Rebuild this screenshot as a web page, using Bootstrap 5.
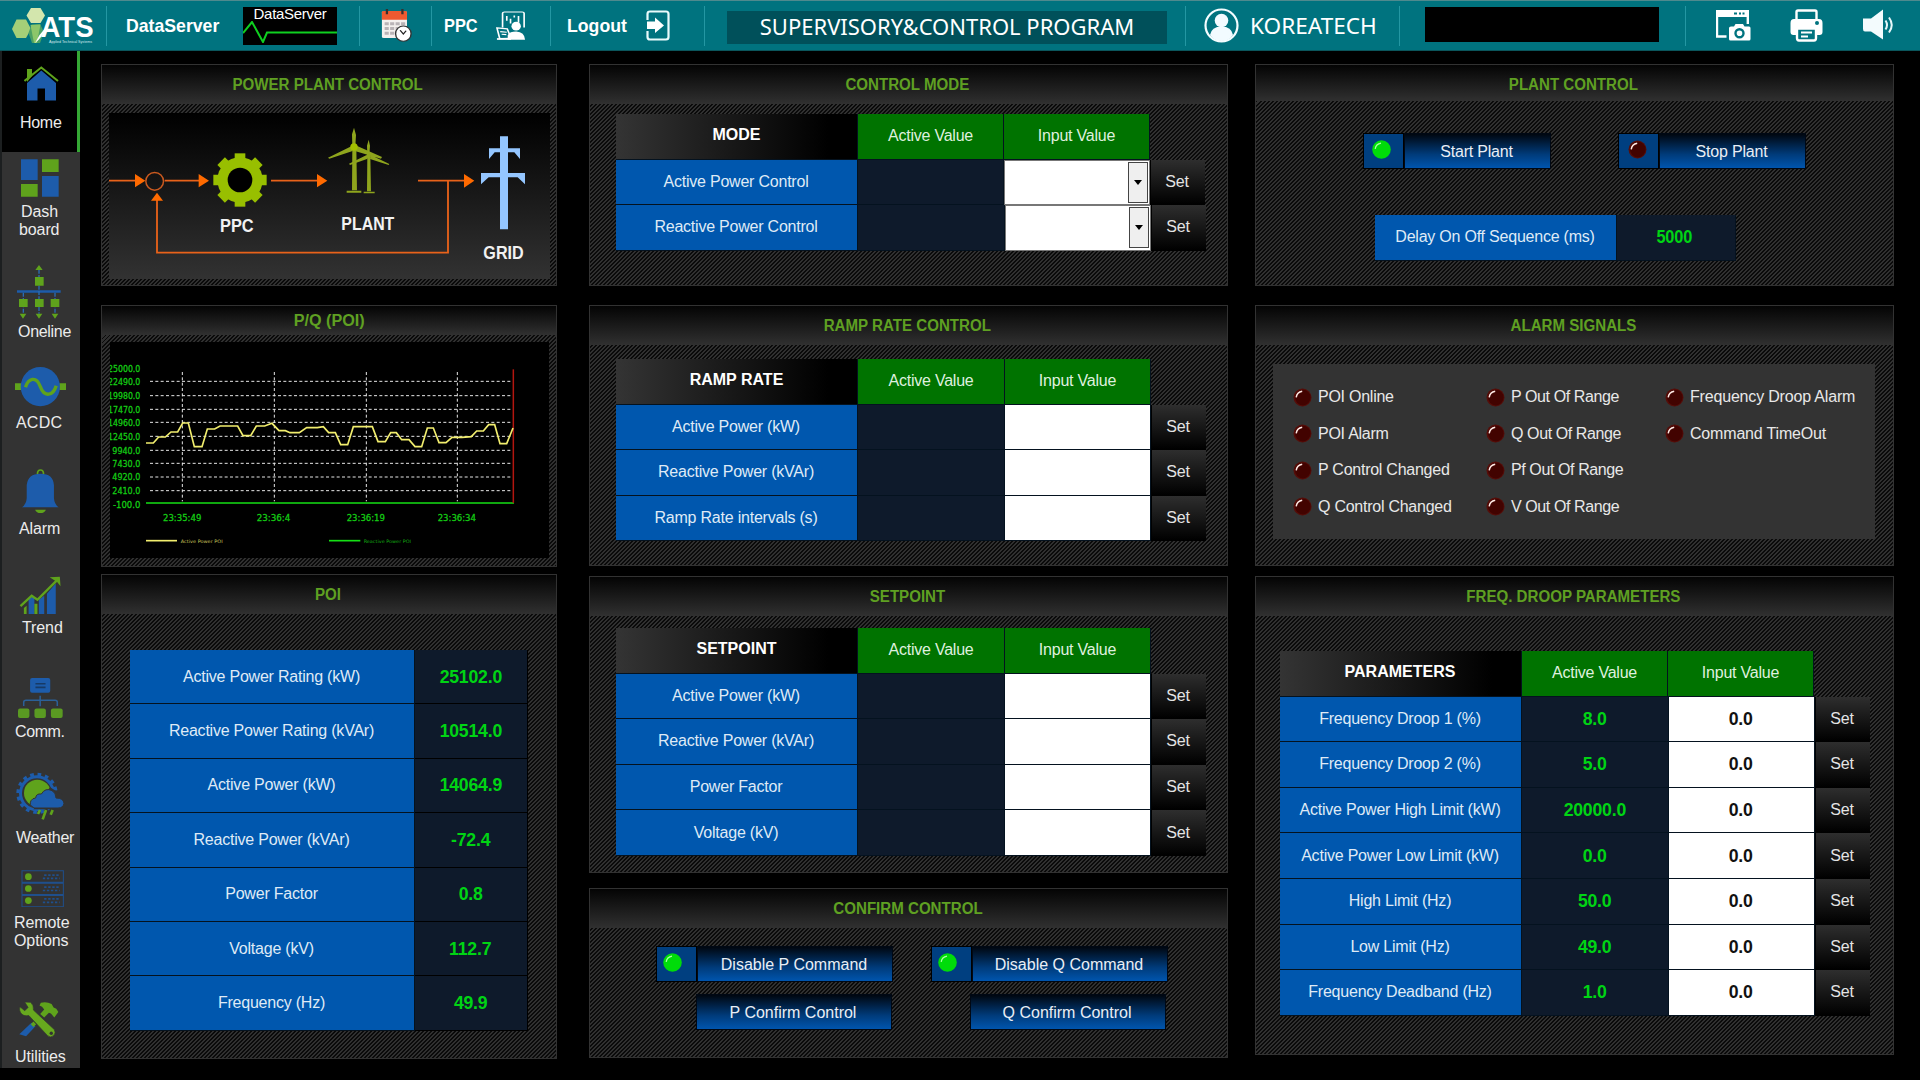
<!DOCTYPE html>
<html lang="en">
<head>
<meta charset="utf-8">
<meta name="viewport" content="width=device-width, initial-scale=1">
<title>Supervisory &amp; Control Program</title>
<link rel="stylesheet" href="https://cdn.jsdelivr.net/npm/bootstrap@5.3.0/dist/css/bootstrap.min.css">
<style>
  body{background:#000;color:#e8e8e8;font:16px/18px "Liberation Sans",Arial,sans-serif;width:1920px;height:1080px;overflow:hidden}
  svg{display:block;flex:none}
  /* top bar */
  .topbar{height:51px;background:#00737f;border-top:1px solid #4f8a8e;border-bottom:1px solid #0b565c;padding:0}
  .seg{display:flex;align-items:center;border-right:1px solid #2497a3;flex:none;height:40px}
  .seg.last{border:0}
  .lbl{font-weight:700;font-size:18px;color:#fff;white-space:nowrap}
  .lbl.tall{font-size:19px;transform-origin:0 50%;transform:scaleX(.93)}
  .ds{width:94px;height:38px;background:#000;margin-left:23px;color:#fff;text-align:center}
  .ds span{display:block;font-size:15px;line-height:14px;letter-spacing:-.3px}
  .prog{width:440px;height:33px;background:#00505a;color:#fff;font:22px/30px "Noto Sans","Open Sans",sans-serif;text-align:center;white-space:nowrap}
  .user-name{font:22.6px/30px "Noto Sans","Open Sans",sans-serif;color:#fff}
  .clockbox{width:234px;height:35px;background:#000}
  .sq{display:inline-block;white-space:nowrap}
  /* side bar */
  .side{width:80px;height:1017px;background:#333;border-left:2px solid #1c1f20;flex:none}
  .side .home{height:101px;background:#000;border-right:3px solid #35a835;padding:15px 0 0}
  .side a{display:block;color:#ececec;text-decoration:none;white-space:nowrap;letter-spacing:-.1px}
  /* panels */
  .panel{border:1px solid #323232;flex:none;background:repeating-linear-gradient(135deg,#0a0a0a 0 1.4px,#303030 1.4px 2.83px)}
  .panel-title{height:39px;padding-bottom:2px;background:linear-gradient(#040404,#303030);color:#5fa022;font-weight:700;font-size:17.4px;display:flex;align-items:center;justify-content:center}
  .panel-title span{transform:translateX(-1px) scaleX(.868);white-space:nowrap}
  .c1{width:456px}.c2{width:639px}.c3{width:639px}
  .ln{display:flex}
  .ln>*{display:flex;align-items:center;justify-content:center;flex:none;border:1px solid #04121f;border-width:0 1px 1px 0;height:45.6px;letter-spacing:-.22px}
  .ln>.nm{width:242px;background:#0057ae;color:#dfeaf6;padding-right:1px}
  .ln>.av{width:147px;background:#0e1a2b}
  .ln>.iv{width:146px;background:#fff}
  .ln>.st{width:55px;padding:0;border-radius:0;border:0;border-left:1px solid #000;border-bottom:1px solid #000;background:linear-gradient(#2e2e2e,#000);color:#e4e4e4;font-size:16px;padding-right:2px}
  .ln>.hd{background:linear-gradient(90deg,#343434,#000 88%);color:#fff;font-weight:700;width:242px;letter-spacing:0;padding-bottom:2px}
  .ln>.gr{background:#007300;color:#dff0df;width:146px}
  .num{color:#00d414;font-weight:700;font-size:18.6px;padding-right:1px}
  .num b{transform:scaleX(.95)}
  .ln>.iv.num{color:#111}
  .ln>.combo{background:#fff;border:1px solid #777;padding:0;justify-content:flex-end}
  .combo i{display:flex;align-items:center;justify-content:center;width:20px;height:41px;background:#efefef;border:1px solid #444;margin-right:1px}
  .combo i:after{content:"";border:4px solid transparent;border-top:5px solid #000;border-bottom:0}
  .poi .ln>*{height:54.4px}
  .poi .ln>.nm{width:285px}.poi .ln>.av{width:113px;border-color:#000}
  .led{width:19px;height:19px;flex:none}
  .led-cell{width:41px;height:36px;background:#003f80;border:1px solid #000;display:flex;align-items:center;justify-content:center;padding-right:5px;padding-bottom:3px;flex:none}
  .cmd{width:147px;height:36px;border:1px solid #000814;border-radius:0;padding:1px 2px 0 0;background:linear-gradient(#00060f,#003b7a 60%,#0055ae);color:#e9eef5;font-size:16px;letter-spacing:-.2px;flex:none}
  .cmd.wide{width:196px;letter-spacing:0}
  .sig{display:flex;align-items:center;gap:6px;height:36.5px;letter-spacing:-.25px;white-space:nowrap}
  .sigbox{background:#333;width:602px;height:175px;margin:19px 0 0 17px;padding:15px 0 0 20px}
</style>
<script src="https://cdn.jsdelivr.net/npm/bootstrap@5.3.0/dist/js/bootstrap.bundle.min.js"></script>
</head>
<body>
<svg width="0" height="0" class="position-absolute">
  <defs>
    <symbol id="off" viewBox="0 0 19 19"><circle cx="9.5" cy="9.5" r="9" fill="#560d08"/><circle cx="9.8" cy="9.6" r="7.8" fill="#420300"/><path d="M3.2 9.3C3.6 6 5.6 3.9 9.2 3.2" fill="none" stroke="#ffe9e4" stroke-width="1.5"/></symbol>
    <symbol id="on" viewBox="0 0 19 19"><circle cx="9.5" cy="9.5" r="9.3" fill="#00dc0a"/><path d="M3.2 8.8C3.6 5.8 5.6 3.9 9 3.2" fill="none" stroke="#aaffa5" stroke-width="1.3"/></symbol>
  </defs>
</svg>

<header class="topbar d-flex align-items-center">
  <div class="seg" style="width:107px">
    <svg width="86" height="42" viewBox="0 0 86 42" style="margin-left:10px">
      <g transform="translate(-10 -4)">
        <path d="M31 7H40.500L45 14.500 40.500 22H31L26.500 14.500z" fill="#d3e6ad"/>
        <path d="M16.500 18.500H26L31 28 26 37H16.500L12 28z" fill="#a5cf78"/>
        <path d="M31.500 23.500L40 23 44 31 40 42H32L28.500 32z" fill="#4aa064"/>
        <path d="M30.500 24L40.500 23.500 37 42H34z" fill="#8cc66a"/>
        <path d="M35 42Q42 37 45.500 27L39.500 34z" fill="#fff"/>
        <text x="40.500" y="36" font-family="Liberation Sans" font-weight="700" font-size="30" textLength="53" lengthAdjust="spacingAndGlyphs" fill="#fff">ATS</text>
        <text x="49" y="41.500" font-family="Liberation Sans" font-size="4" textLength="43" lengthAdjust="spacingAndGlyphs" fill="#d5eaec">Applied Technical Systems</text>
      </g>
    </svg>
  </div>
  <div class="seg" style="width:253px;padding-left:19px">
    <span class="lbl tall" style="width:94px">DataServer</span>
    <div class="ds"><span>DataServer</span>
      <svg width="94" height="22" viewBox="0 0 94 22"><path d="M0 12L9 1 20 21 24 11.500H94" fill="none" stroke="#0fd020" stroke-width="2"/></svg>
    </div>
  </div>
  <div class="seg" style="width:72px;padding-left:21px">
    <svg width="31" height="33" viewBox="829 28 68 99" preserveAspectRatio="none">
      <path d="M831 36H886V112Q886 115 882 115H835Q831 115 831 112z" fill="#f4f0ee"/><path d="M831 38Q831 34 835 34H882Q886 34 886 38V60H831z" fill="#ee5a30"/>
      <path d="M842 28V44M876 28V44" stroke="#35302f" stroke-width="5"/>
      <path d="M837 68h9v9h-9zM849 68h9v9h-9zM861 68h9v9h-9zM873 68h9v9h-9zM837 82h9v9h-9zM849 82h9v9h-9zM861 82h9v9h-9zM837 96h9v9h-9zM849 96h9v9h-9z" fill="#b9b3b6"/>
      <ellipse cx="878" cy="102" rx="17" ry="23" fill="#fff" stroke="#333" stroke-width="3"/><path d="M871 92L878 103 884 93" fill="none" stroke="#222" stroke-width="3"/>
    </svg>
  </div>
  <div class="seg" style="width:119px;padding-left:12px">
    <span class="lbl tall" style="width:52px;transform:scaleX(.86)">PPC</span>
    <svg width="30" height="29" viewBox="1080 35 64 86" preserveAspectRatio="none">
      <g fill="none" stroke="#fff" stroke-width="3.500"><path d="M1094 84V42Q1094 38 1098 38H1136Q1140 38 1140 42V84"/><path d="M1103 50V64M1111 58V72M1119 48V54M1128 50V70" /><path d="M1082 85L1104 88 1112 116 1088 117z"/><path d="M1089 96l14 2M1092 104l10 1"/></g>
      <ellipse cx="1123" cy="80" rx="10" ry="13" fill="#fff"/><path d="M1105 120V108Q1108 96 1123 96 1141 98 1142 120z" fill="#fff"/><path d="M1082 118h30" stroke="#fff" stroke-width="5"/>
    </svg>
  </div>
  <div class="seg" style="width:154px;padding-left:16px">
    <span class="lbl tall" style="width:79px">Logout</span>
    <svg width="24" height="31" viewBox="0 0 24 31"><path d="M1.500 10V4Q1.500 1.500 4 1.500H20Q22.500 1.500 22.500 4V27Q22.500 29.500 20 29.500H4Q1.500 29.500 1.500 27V21" fill="none" stroke="#e9fbfc" stroke-width="2.200"/><path d="M1 11.500H9V7.500L18 15.500 9 23V19H1z" fill="#fff"/></svg>
  </div>
  <div class="seg" style="width:481px;padding-left:22px;padding-top:3px"><div class="prog"><span class="sq">SUPERVISORY&amp;CONTROL PROGRAM</span></div></div>
  <div class="seg" style="width:214px;padding-left:18px">
    <svg width="35" height="35" viewBox="0 0 35 35"><circle cx="17.500" cy="17.500" r="16" fill="none" stroke="#f4fdff" stroke-width="2.200"/><circle cx="17.500" cy="12.500" r="6.800" fill="#f2fbff"/><path d="M6 27Q7.500 18.500 17.500 18.500T29 27Q25 33 17.500 33T6 27z" fill="#f2fbff"/></svg>
    <span class="user-name sq" style="margin-left:11px">KOREATECH</span>
  </div>
  <div class="seg" style="width:286px;padding-left:25px;padding-bottom:3px"><div class="clockbox"></div></div>
  <div class="seg last" style="width:234px;padding-left:30px">
    <svg width="35" height="31" viewBox="0 0 35 31"><path d="M1 1V26.500H10.500" fill="none" stroke="#fff" stroke-width="2.400"/><path d="M0 0H33V7H0z" fill="#fff"/><path d="M18 3.500h3M23 3.500h2M26.500 3.500h2" stroke="#00737f" stroke-width="1.800"/><path d="M31.800 5V14" stroke="#fff" stroke-width="2.400"/><path d="M15 16.500H18L19.500 14H27L28.500 16.500H33Q34.500 16.500 34.500 18V29Q34.500 30.500 33 30.500H14.500Q13 30.500 13 29V18Q13 16.500 15 16.500z" fill="#fff"/><circle cx="23.500" cy="23.300" r="4" fill="none" stroke="#00737f" stroke-width="2.400"/></svg>
    <svg width="33" height="33" viewBox="0 0 33 33" style="margin-left:39px;margin-bottom:1px"><path d="M6.500 10V3Q6.500 1.500 8 1.500H25Q26.500 1.500 26.500 3V10" fill="none" stroke="#fff" stroke-width="2.400"/><path d="M4 10H29Q32.500 10 32.500 14V23Q32.500 26 29.500 26H27V19H6V26H3.500Q.5 26 .5 23V14Q.5 10 4 10z" fill="#fff"/><circle cx="27" cy="14" r="2" fill="#00737f"/><path d="M7 19.500H26V29Q26 31.500 24 31.500H9Q7 31.500 7 29z" fill="none" stroke="#fff" stroke-width="2.400"/><path d="M11 23.500H22M11 27.500H18" stroke="#fff" stroke-width="2"/></svg>
    <svg width="31" height="31" viewBox="0 0 31 31" style="margin-left:40px;margin-bottom:3px"><path d="M0 9.500H8L20 .5V30.500L8 22.500H2Q0 22.500 0 20z" fill="#f3fbfd"/><path d="M22.500 11.500Q25.500 16 22.500 20.500M26 8.500Q31.500 16 26 23.500" fill="none" stroke="#e7f8fa" stroke-width="2"/></svg>
  </div>
</header>

<main class="d-flex">
  <nav class="side">
    <a href="#" class="home">
      <svg width="35" height="36" viewBox="24 66 35 36" style="margin-left:22px"><path d="M27 82V69H32V76" fill="#5fa31c"/><path d="M24.500 81L41.300 67.500 58 81" fill="none" stroke="#5fa31c" stroke-width="2"/><path d="M27 83L41.300 70.500 56 83V100.500H45V88.500H37.500V100.500H27z" fill="#1d5cab"/></svg>
      <div style="margin:12px 0 0 18px;letter-spacing:-.3px">Home</div>
    </a>
    <a href="#" style="padding-top:7px">
      <svg width="38" height="38" viewBox="65 57 114 114" style="margin-left:19px"><path d="M65 58h50v62H65zM128 108h50v62H128z" fill="#1d5cab"/><path d="M128 58h50v38H128zM65 132h50v38H65z" fill="#5fa31c"/></svg>
      <div style="margin:6px 0 0 19px">Dash<br><span style="margin-left:-2px">board</span></div>
    </a>
    <a href="#" style="padding-top:26px">
      <svg width="44" height="54" viewBox="50 374 132 162" style="margin-left:15px"><path d="M50 450h131v7H50z" fill="#1d5cab"/><path d="M116 388V520M69 457V520M164 457V520" stroke="#2a6cb5" stroke-width="4" stroke-dasharray="12 4"/><path d="M104 410h26v26h-26zM56 476h26v24H56zM104 476h26v24h-26zM151 476h26v24h-26zM116 374l11 15h-22zM68 535l-10-15h20zM116 535l-10-15h20zM164 535l-10-15h20z" fill="#5fa31c"/></svg>
      <div style="margin:4px 0 0 16px;letter-spacing:-.3px">Oneline</div>
    </a>
    <a href="#" style="padding-top:26px">
      <svg width="51" height="40" viewBox="45 685 151 118" style="margin-left:13px"><path d="M45 733h20v20H45zM176 733h20v20h-20z" fill="#5fa31c"/><circle cx="120" cy="743" r="58" fill="#1d5cab"/><path d="M76 745C84 718 108 710 120 743S158 770 167 740" fill="none" stroke="#5fa31c" stroke-width="10"/></svg>
      <div style="margin:7px 0 0 14px;letter-spacing:.2px">ACDC</div>
    </a>
    <a href="#" style="padding-top:37px">
      <svg width="37" height="44" viewBox="65 988 110 131" style="margin-left:20px"><path d="M111 1003Q111 991 120 991T129 1003" fill="none" stroke="#5fa31c" stroke-width="5"/><path d="M104 1109H136Q132 1119 120 1119T104 1109z" fill="#5fa31c"/><path d="M65 1102Q78 1092 79 1074V1036Q82 1002 120 1002T160 1036V1074Q161 1092 174 1102z" fill="#1d5cab"/></svg>
      <div style="margin:7px 0 0 17px">Alarm</div>
    </a>
    <a href="#" style="padding-top:38px">
      <svg width="43" height="38" viewBox="58 1308 126 112" style="margin-left:17px"><path d="M86 1420V1376l11-8 6 6V1420zM116 1420V1378l16-12V1420zM140 1420V1360L166 1330V1420z" fill="#1d5cab"/><path d="M72 1420V1402l8-6V1420zM103 1420V1390h9V1420z" fill="#5fa31c"/><path d="M62 1397L95 1366 112 1378 170 1320" fill="none" stroke="#5fa31c" stroke-width="7"/><path d="M148 1312L178 1310 180 1338 170 1326z" fill="#5fa31c"/></svg>
      <div style="margin:5px 0 0 20px">Trend</div>
    </a>
    <a href="#" style="padding-top:41px">
      <svg width="45" height="40" viewBox="54 231 134 119" style="margin-left:16px"><rect x="90" y="231" width="60" height="44" rx="6" fill="#1d5cab"/><path d="M106 248h30M106 259h30" stroke="#173a66" stroke-width="5"/><path d="M120 284V315M71 314V303Q71 297 78 297H164Q171 297 171 303V314" fill="none" stroke="#2b6098" stroke-width="4.500"/><g fill="#5a9a22"><rect x="54" y="322" width="34" height="28" rx="6"/><rect x="103" y="322" width="34" height="28" rx="6"/><rect x="152" y="322" width="35" height="28" rx="6"/></g></svg>
      <div style="margin:5px 0 0 13px;letter-spacing:-.4px">Comm.</div>
    </a>
    <a href="#" style="padding-top:31px">
      <svg width="48" height="48" viewBox="48 514 144 144" style="margin-left:14px"><circle cx="111" cy="578" r="54" fill="#1d5cab"/><circle cx="111" cy="578" r="57" fill="none" stroke="#1d5cab" stroke-width="10" stroke-dasharray="11 11.380"/><circle cx="111" cy="578" r="45" fill="#333"/><circle cx="112" cy="577" r="40" fill="#5fa31c"/><path d="M100 626H200V590L150 560z" fill="#333"/><path d="M100 620Q86 614 93 600 98 592 107 592 108 578 124 580 136 560 156 570 168 576 168 592 190 592 192 608 190 622 174 622H104z" fill="#1d5cab" stroke="#333" stroke-width="3"/><path d="M120 628l-6 12M138 628l-10 28M158 628l-6 14" stroke="#5fa31c" stroke-width="8"/></svg>
      <div style="margin:9px 0 0 14px;letter-spacing:-.3px">Weather</div>
    </a>
    <a href="#" style="padding-top:23px">
      <svg width="43" height="37" viewBox="62 808 126 110" style="margin-left:19px"><g fill="none" stroke="#1f4f8c" stroke-width="3"><path d="M64 810H187V846H64zM64 846H187V881H64zM64 881H187V917H64z"/><path d="M64 846H187M64 882H187" stroke-width="6"/><path d="M126 833L176 833M130 823H176M126 869H176M130 859H176M126 904H176M130 894H176" stroke-dasharray="7 5" stroke-width="5"/></g><g fill="#5fa31c"><circle cx="83" cy="828" r="10"/><circle cx="83" cy="863" r="10"/><circle cx="83" cy="899" r="10"/></g></svg>
      <div style="margin:7px 0 0 12px">Remote<br>Options</div>
    </a>
    <a href="#" style="padding-top:51px">
      <svg width="40" height="37" viewBox="57 1203 119 110" style="margin-left:17px"><path d="M94 1268l12 10-28 30-20-6z" fill="#1d5cab"/><path d="M92 1272l8-8 8 8-8 8z" fill="#5fa31c"/><path d="M122 1208Q140 1204 154 1212L160 1222 168 1226 174 1236 162 1252 152 1240 146 1238 132 1252 120 1242 132 1228Q126 1218 118 1216z" fill="#5fa31c"/><path d="M74 1206L92 1207Q102 1216 100 1230L162 1288Q168 1298 160 1306 150 1314 142 1306L86 1246Q70 1250 62 1238 56 1230 60 1220L74 1232 84 1222z" fill="#67a91e" stroke="#333" stroke-width="2"/><circle cx="153" cy="1299" r="5" fill="#333"/></svg>
      <div style="margin:10px 0 0 13px">Utilities</div>
    </a>
  </nav>

  <section class="d-flex flex-column c1" style="margin-left:21px;padding-top:13px">
    <div class="panel" style="height:222px">
      <div class="panel-title"><span>POWER PLANT CONTROL</span></div>
      <svg width="441" height="166" viewBox="57 188 1323 498" style="margin:9px 0 0 7px">
        <defs><linearGradient id="pg" x1="0" y1="0" x2="0" y2="1"><stop offset="0" stop-color="#000"/><stop offset="1" stop-color="#323232"/></linearGradient></defs>
        <rect x="57" y="188" width="1323" height="498" fill="url(#pg)"/>
        <g fill="none" stroke="#e8621a" stroke-width="5.500"><path d="M57 391H140M224 391H330M543 391H684M984 391H1126M1074 393V607H201V445"/><circle cx="194" cy="393" r="26.500" stroke="#c9591f" stroke-width="4.500"/></g>
        <path d="M135 371L166 391 135 411zM326 371L357 391 326 411zM681 371L712 391 681 411zM1122 371L1153 391 1122 412zM201 427L219 451H183z" fill="#ff6a00"/>
        <g fill="#98bf00"><circle cx="450" cy="389" r="68"/>
          <path d="M434 309h32v160h-32z"/><path d="M434 309h32v160h-32z" transform="rotate(45 450 389)"/><path d="M434 309h32v160h-32z" transform="rotate(90 450 389)"/><path d="M434 309h32v160h-32z" transform="rotate(135 450 389)"/></g>
        <circle cx="450" cy="389" r="37" fill="#000"/>
        <g fill="#8fa51d"><path d="M787 292h12l2 128h-15zM832 318h9l2 105h-12z"/><path d="M770 421h44v6h-44zM821 424h33v5h-33z"/><path d="M792 232l6 22-2 34h-9l-1-36zM836 268l4 18-2 28h-6l-1-28z"/><path d="M784 288l-70 34 4 3 70-23zM800 286l76 34-3 5-76-22zM830 314l-53 26 3 4 53-19zM842 314l56 27-2 3-56-18z"/><circle cx="792" cy="290" r="11" fill="#a3c000"/><circle cx="836" cy="317" r="7"/></g>
        <path d="M1230 258h24V294H1290V326L1273 306H1254V368H1305V402L1283 381H1254V537H1230V381H1196L1173 402V368H1230V306H1214L1197 326V294H1230z" fill="#94c6ff"/>
        <g font-family="Liberation Sans" font-weight="700" font-size="55" fill="#f2f2f2"><text x="390" y="544" textLength="101" lengthAdjust="spacingAndGlyphs">PPC</text><text x="754" y="539" textLength="159" lengthAdjust="spacingAndGlyphs">PLANT</text><text x="1180" y="625" textLength="121" lengthAdjust="spacingAndGlyphs">GRID</text></g>
      </svg>
    </div>
    <div class="panel" style="height:262px;margin-top:19px">
      <div class="panel-title" style="height:29px"><span style="transform:scaleX(.93)">P/Q (POI)</span></div>
      <svg width="439" height="216" viewBox="60 126 1317 648" style="margin:7px 0 0 8px">
        <rect x="60" y="126" width="1317" height="648"/>
        <g stroke="#e6e6e6" stroke-width="3" stroke-dasharray="9 7"><path d="M180 244H1268M180 287H1268M180 328H1268M180 367H1268M180 409H1268M180 451H1268M180 490H1268M180 531H1268M180 572H1268M277 216V604M553 216V604M829 216V604M1102 216V604"/></g>
        <path d="M168 609H1272" stroke="#15e015" stroke-width="5"/>
        <path d="M1270 208V609" stroke="#b3160f" stroke-width="4.500"/>
        <path d="M168 429H190L206 411H226L243 396H263L278 369H295L313 440H336L352 387H374L390 378H443L459 407H482L499 378H524L546 370 567 392H586L600 398H628L650 383H682L700 380 716 398H736L752 434H773L790 380H847L864 425H886L902 398H919L935 419H957L975 440H995L1012 384H1030L1047 428H1068L1086 412H1116L1144 410 1160 393H1180L1196 374H1214L1230 431H1250L1269 384" fill="none" stroke="#f2ee6e" stroke-width="5"/>
        <g font-family="DejaVu Sans Condensed,DejaVu Sans" font-size="27" fill="#14cc14" stroke="#14cc14" stroke-width=".8" text-anchor="end"><text x="151" y="216" textLength="97" lengthAdjust="spacingAndGlyphs">25000.0</text><text x="151" y="254" textLength="97" lengthAdjust="spacingAndGlyphs">22490.0</text><text x="151" y="296" textLength="97" lengthAdjust="spacingAndGlyphs">19980.0</text><text x="151" y="338" textLength="97" lengthAdjust="spacingAndGlyphs">17470.0</text><text x="151" y="377" textLength="97" lengthAdjust="spacingAndGlyphs">14960.0</text><text x="151" y="419" textLength="97" lengthAdjust="spacingAndGlyphs">12450.0</text><text x="151" y="461" textLength="84" lengthAdjust="spacingAndGlyphs">9940.0</text><text x="151" y="500" textLength="84" lengthAdjust="spacingAndGlyphs">7430.0</text><text x="151" y="541" textLength="84" lengthAdjust="spacingAndGlyphs">4920.0</text><text x="151" y="582" textLength="84" lengthAdjust="spacingAndGlyphs">2410.0</text><text x="151" y="624" textLength="82" lengthAdjust="spacingAndGlyphs">-100.0</text></g>
        <g font-family="DejaVu Sans Condensed,DejaVu Sans" font-size="27" fill="#14cc14" stroke="#14cc14" stroke-width=".8"><text x="219" y="663" textLength="115" lengthAdjust="spacingAndGlyphs">23:35:49</text><text x="500" y="663" textLength="101" lengthAdjust="spacingAndGlyphs">23:36:4</text><text x="770" y="663" textLength="115" lengthAdjust="spacingAndGlyphs">23:36:19</text><text x="1043" y="663" textLength="115" lengthAdjust="spacingAndGlyphs">23:36:34</text></g>
        <path d="M168 722H261" stroke="#f2ee6e" stroke-width="5"/><path d="M717 722H811" stroke="#15e015" stroke-width="5"/>
        <g font-family="DejaVu Sans" font-size="14"><text x="272" y="728" textLength="126" lengthAdjust="spacingAndGlyphs" fill="#c8c25a">Active Power POI</text><text x="821" y="728" textLength="142" lengthAdjust="spacingAndGlyphs" fill="#12a812">Reactive Power POI</text></g>
      </svg>
    </div>
    <div class="panel poi" style="height:485px;margin-top:7px">
      <div class="panel-title"><span>POI</span></div>
      <div style="margin:36px 0 0 28px">
        <div class="ln"><div class="nm">Active Power Rating (kW)</div><div class="av num"><b>25102.0</b></div></div>
        <div class="ln"><div class="nm">Reactive Power Rating (kVAr)</div><div class="av num"><b>10514.0</b></div></div>
        <div class="ln"><div class="nm">Active Power (kW)</div><div class="av num"><b>14064.9</b></div></div>
        <div class="ln"><div class="nm">Reactive Power (kVAr)</div><div class="av num"><b>-72.4</b></div></div>
        <div class="ln"><div class="nm">Power Factor</div><div class="av num"><b>0.8</b></div></div>
        <div class="ln"><div class="nm">Voltage (kV)</div><div class="av num"><b>112.7</b></div></div>
        <div class="ln"><div class="nm">Frequency (Hz)</div><div class="av num"><b>49.9</b></div></div>
      </div>
    </div>
  </section>

  <section class="d-flex flex-column c2" style="margin-left:32px;padding-top:13px">
    <div class="panel" style="height:222px">
      <div class="panel-title"><span>CONTROL MODE</span></div>
      <div style="margin:10px 0 0 26px">
        <div class="ln"><div class="hd">MODE</div><div class="gr">Active Value</div><div class="gr">Input Value</div></div>
        <div class="ln"><div class="nm">Active Power Control</div><div class="av" style="width:146px"></div><div class="combo" style="width:146px"><i></i></div><button class="btn st">Set</button></div>
        <div class="ln"><div class="nm">Reactive Power Control</div><div class="av"></div><div class="combo" style="width:146px"><i></i></div><button class="btn st">Set</button></div>
      </div>
    </div>
    <div class="panel" style="height:261px;margin-top:19px">
      <div class="panel-title"><span>RAMP RATE CONTROL</span></div>
      <div style="margin:14px 0 0 26px">
        <div class="ln"><div class="hd">RAMP RATE</div><div class="gr" style="width:147px">Active Value</div><div class="gr">Input Value</div></div>
        <div class="ln"><div class="nm">Active Power (kW)</div><div class="av"></div><div class="iv"></div><button class="btn st">Set</button></div>
        <div class="ln"><div class="nm">Reactive Power (kVAr)</div><div class="av"></div><div class="iv"></div><button class="btn st">Set</button></div>
        <div class="ln"><div class="nm">Ramp Rate intervals (s)</div><div class="av"></div><div class="iv"></div><button class="btn st">Set</button></div>
      </div>
    </div>
    <div class="panel" style="height:297px;margin-top:10px">
      <div class="panel-title"><span>SETPOINT</span></div>
      <div style="margin:12px 0 0 26px">
        <div class="ln"><div class="hd">SETPOINT</div><div class="gr" style="width:147px">Active Value</div><div class="gr">Input Value</div></div>
        <div class="ln"><div class="nm">Active Power (kW)</div><div class="av"></div><div class="iv"></div><button class="btn st">Set</button></div>
        <div class="ln"><div class="nm">Reactive Power (kVAr)</div><div class="av"></div><div class="iv"></div><button class="btn st">Set</button></div>
        <div class="ln"><div class="nm">Power Factor</div><div class="av"></div><div class="iv"></div><button class="btn st">Set</button></div>
        <div class="ln"><div class="nm">Voltage (kV)</div><div class="av"></div><div class="iv"></div><button class="btn st">Set</button></div>
      </div>
    </div>
    <div class="panel" style="height:170px;margin-top:15px">
      <div class="panel-title"><span>CONFIRM CONTROL</span></div>
      <div class="d-flex" style="margin:18px 0 0 66px">
        <div class="led-cell" style="padding-right:8px"><svg class="led"><use href="#on"/></svg></div><button class="btn cmd wide">Disable P Command</button>
        <div class="led-cell" style="margin-left:38px;padding-right:8px"><svg class="led"><use href="#on"/></svg></div><button class="btn cmd wide">Disable Q Command</button>
      </div>
      <div class="d-flex" style="margin:12px 0 0 106px">
        <button class="btn cmd wide">P Confirm Control</button><button class="btn cmd wide" style="margin-left:78px">Q Confirm Control</button>
      </div>
    </div>
  </section>

  <section class="d-flex flex-column c3" style="margin-left:27px;padding-top:13px">
    <div class="panel" style="height:222px">
      <div class="panel-title" style="height:36px;padding:2px 0 0"><span>PLANT CONTROL</span></div>
      <div class="d-flex" style="margin:32px 0 0 107px">
        <div class="led-cell"><svg class="led"><use href="#on"/></svg></div><button class="btn cmd">Start Plant</button>
        <div class="led-cell" style="margin-left:67px;padding-right:3px"><svg class="led"><use href="#off"/></svg></div><button class="btn cmd">Stop Plant</button>
      </div>
      <div class="ln" style="margin:46px 0 0 119px"><div class="nm">Delay On Off Sequence (ms)</div><div class="av num" style="width:119px;padding-right:3px"><b style="transform:scaleX(.88)">5000</b></div></div>
    </div>
    <div class="panel" style="height:261px;margin-top:19px">
      <div class="panel-title"><span>ALARM SIGNALS</span></div>
      <div class="sigbox d-flex">
        <div style="width:193px">
          <div class="sig"><svg class="led"><use href="#off"/></svg>POI Online</div>
          <div class="sig"><svg class="led"><use href="#off"/></svg>POI Alarm</div>
          <div class="sig"><svg class="led"><use href="#off"/></svg>P Control Changed</div>
          <div class="sig"><svg class="led"><use href="#off"/></svg>Q Control Changed</div>
        </div>
        <div style="width:179px">
          <div class="sig" style="letter-spacing:-.4px"><svg class="led"><use href="#off"/></svg>P Out Of Range</div>
          <div class="sig" style="letter-spacing:-.4px"><svg class="led"><use href="#off"/></svg>Q Out Of Range</div>
          <div class="sig" style="letter-spacing:-.4px"><svg class="led"><use href="#off"/></svg>Pf Out Of Range</div>
          <div class="sig" style="letter-spacing:-.4px"><svg class="led"><use href="#off"/></svg>V Out Of Range</div>
        </div>
        <div>
          <div class="sig" style="letter-spacing:-.18px"><svg class="led"><use href="#off"/></svg>Frequency Droop Alarm</div>
          <div class="sig" style="letter-spacing:-.18px"><svg class="led"><use href="#off"/></svg>Command TimeOut</div>
        </div>
      </div>
    </div>
    <div class="panel" style="height:479px;margin-top:10px">
      <div class="panel-title"><span>FREQ. DROOP PARAMETERS</span></div>
      <div style="margin:35px 0 0 24px">
        <div class="ln"><div class="hd" style="padding-right:1px">PARAMETERS</div><div class="gr">Active Value</div><div class="gr">Input Value</div></div>
        <div class="ln"><div class="nm">Frequency Droop 1 (%)</div><div class="av num"><b>8.0</b></div><div class="iv num"><b>0.0</b></div><button class="btn st">Set</button></div>
        <div class="ln"><div class="nm">Frequency Droop 2 (%)</div><div class="av num"><b>5.0</b></div><div class="iv num"><b>0.0</b></div><button class="btn st">Set</button></div>
        <div class="ln"><div class="nm">Active Power High Limit (kW)</div><div class="av num"><b>20000.0</b></div><div class="iv num"><b>0.0</b></div><button class="btn st">Set</button></div>
        <div class="ln"><div class="nm">Active Power Low Limit (kW)</div><div class="av num"><b>0.0</b></div><div class="iv num"><b>0.0</b></div><button class="btn st">Set</button></div>
        <div class="ln"><div class="nm">High Limit (Hz)</div><div class="av num"><b>50.0</b></div><div class="iv num"><b>0.0</b></div><button class="btn st">Set</button></div>
        <div class="ln"><div class="nm">Low Limit (Hz)</div><div class="av num"><b>49.0</b></div><div class="iv num"><b>0.0</b></div><button class="btn st">Set</button></div>
        <div class="ln"><div class="nm">Frequency Deadband (Hz)</div><div class="av num"><b>1.0</b></div><div class="iv num"><b>0.0</b></div><button class="btn st">Set</button></div>
      </div>
    </div>
  </section>
</main>
</body>
</html>
